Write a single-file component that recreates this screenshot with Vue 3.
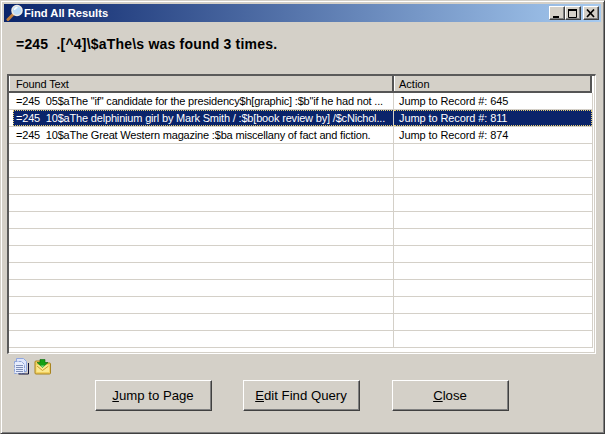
<script setup>
const found = [
  { text: '=245  05$aThe "if" candidate for the presidency$h[graphic] :$b"if he had not ...', action: 'Jump to Record #: 645' },
  { text: '=245  10$aThe delphinium girl by Mark Smith / :$b[book review by] /$cNichol...', action: 'Jump to Record #: 811', selected: true },
  { text: '=245  10$aThe Great Western magazine :$ba miscellany of fact and fiction.', action: 'Jump to Record #: 874' }
]
const rows = [...found, ...Array.from({ length: 12 }, () => ({ text: '', action: '' }))]
</script>

<template>
  <div class="window">
    <div class="titlebar">
      <svg class="title-icon" width="18" height="18" viewBox="0 0 18 18">
        <path d="M7 10.5 L2 15.5" stroke="#c08040" stroke-width="3" stroke-linecap="round" />
        <circle cx="11" cy="6.5" r="5" fill="#bcdcf8" stroke="#eeeae2" stroke-width="1.6" />
        <path d="M8.5 6 A3 3 0 0 1 11.5 3.5" stroke="#ffffff" stroke-width="1.3" fill="none" />
      </svg>
      <span class="title-text">Find All Results</span>
      <div class="win-buttons">
        <button class="win-btn min"><svg width="10" height="9" viewBox="0 0 10 9"><rect x="1" y="7" width="6" height="2" fill="#000" /></svg></button>
        <button class="win-btn max"><svg width="10" height="9" viewBox="0 0 10 9"><path d="M0.5 1.5h8v7h-8z" fill="none" stroke="#000" /><rect x="0" y="0" width="9" height="2" fill="#000" /></svg></button>
        <button class="win-btn close"><svg width="10" height="9" viewBox="0 0 10 9"><path d="M1 0.5 L8 8 M8 0.5 L1 8" stroke="#000" stroke-width="1.7" /></svg></button>
      </div>
    </div>

    <p class="message">=245&nbsp;&nbsp;.[^4]\$aThe\s was found 3 times.</p>

    <div class="grid">
      <div class="sheet">
        <div class="head">
          <div class="head-cell head-first">Found Text</div>
          <div class="head-cell head-second">Action</div>
        </div>
        <div v-for="(row, i) in rows" :key="i" class="row" :class="{ selected: row.selected }">
          <div class="cell first">{{ row.text }}</div>
          <div class="cell second">{{ row.action }}</div>
        </div>
      </div>
    </div>

    <div class="tools">
      <svg width="17" height="17" viewBox="0 0 17 17">
        <path d="M3.5 .5h7l3 3v10h-10z" fill="#dfe6fb" stroke="#8fa6e0" />
        <path d="M1.5 3.5h7l3 3v9h-10z" fill="#e6ecfd" stroke="#8ea4d8" stroke-dasharray="3 1" />
        <path d="M3 7.5h7M3 9.5h7M3 11.5h7M3 13.5h7" stroke="#7f8fb8" />
        <path d="M15.5 5v11h-10" fill="none" stroke="#10103a" />
      </svg>
      <svg width="17" height="16" viewBox="0 0 17 16">
        <path d="M1 5 V3 a1 1 0 0 1 1 -1 h4 l1 2 h8.500 a1 1 0 0 1 1 1 v9 a1 1 0 0 1 -1 1 h-13.500 a1 1 0 0 1 -1 -1z" fill="#f2d060" stroke="#a88420" />
        <path d="M2.500 6 H15 V13 H2.500z" fill="#fbe890" />
        <path d="M3 7 L8.500 11.500 L14.500 7" fill="none" stroke="#c8a030" />
        <path d="M6 .5 h5 v3 h3 L8.500 8.500 L3 3.500 h3z" fill="#14a014" stroke="#0a6a0a" stroke-width=".6" />
        <path d="M6.500 6.500 h4 L8.500 8.500z" fill="#80e080" />
      </svg>
    </div>

    <div class="actions">
      <button class="btn"><span><u>J</u>ump to Page</span></button>
      <button class="btn"><span><u>E</u>dit Find Query</span></button>
      <button class="btn"><span><u>C</u>lose</span></button>
    </div>
  </div>
</template>

<style>
html, body { margin: 0; background: #d4d0c8; }
</style>

<style scoped>
.window {
  box-sizing: border-box;
  width: 605px;
  height: 434px;
  padding: 3px;
  background: #d4d0c8;
  border: 1px solid;
  border-color: #d4d0c8 #404040 #404040 #d4d0c8;
  box-shadow: inset 1px 1px 0 #fff, inset -1px -1px 0 #808080;
  font-family: "Liberation Sans", sans-serif;
  font-size: 11px;
  color: #000;
  overflow: hidden;
}
.titlebar {
  height: 18px;
  display: flex;
  align-items: center;
  background: linear-gradient(90deg, #0a246a, #a6caf0);
  color: #fff;
}
.title-icon { flex: none; margin: 0 0 0 2px; }
.title-text { font-weight: bold; font-size: 11.2px; }
.win-buttons { margin-left: auto; display: flex; margin-right: 2px; }
.win-btn {
  box-sizing: border-box;
  width: 16px;
  height: 14px;
  padding: 0;
  display: flex;
  align-items: center;
  justify-content: center;
  background: #d4d0c8;
  border: 1px solid;
  border-color: #fff #404040 #404040 #fff;
  box-shadow: inset -1px -1px 0 #808080;
}
.win-btn.close { margin-left: 2px; }
.message {
  margin: 15px 0 0 12px;
  height: 37px;
  font-weight: bold;
  font-size: 14px;
  line-height: 15px;
  letter-spacing: .2px;
  white-space: pre;
}
.grid {
  box-sizing: border-box;
  width: 589px;
  height: 280px;
  margin-left: 3px;
  background: #fff;
  border-style: solid;
  border-width: 2px 1px 1px 2px;
  border-color: #5a5a5a #fff #fff #5a5a5a;
}
.sheet {
  box-sizing: border-box;
  height: 277px;
  border-right: 1px solid #d4d0c8;
  border-bottom: 1px solid #d4d0c8;
  overflow: hidden;
}
.head { display: flex; height: 17px; }
.head-cell {
  box-sizing: border-box;
  height: 17px;
  padding-left: 6px;
  line-height: 17px;
  background: #d4d0c8;
  border-bottom: 2px solid #555;
  border-right: 2px solid #555;
  box-shadow: inset 1px 0 0 #fff;
}
.head-first { width: 385px; padding-left: 7px; letter-spacing: -.15px; }
.head-second { width: 198px; padding-left: 5px; }
.row {
  display: flex;
  width: 584px;
  height: 17px;
  box-sizing: border-box;
  border-bottom: 1px solid #d4d0c8;
}
.cell {
  box-sizing: border-box;
  height: 16px;
  line-height: 16px;
  white-space: pre;
  overflow: hidden;
}
.cell.first {
  width: 381px;
  margin-left: 4px;
  padding-left: 3px;
  letter-spacing: -.18px;
  border-right: 1px solid #d4d0c8;
}
.cell.second {
  width: 199px;
  padding-left: 5px;
  letter-spacing: -.1px;
  border-right: 1px solid #d4d0c8;
}
.row.selected .cell {
  background: #0a246a;
  color: #fff;
  line-height: 14px;
  border-top: 1px dotted #e6cf6e;
  border-bottom: 1px dotted #e6cf6e;
}
.row.selected .cell.first {
  padding-left: 2px;
  border-left: 1px dotted #e6cf6e;
}
.row.selected .cell.second {
  width: 198px;
  border-right: 1px dotted #e6cf6e;
  box-shadow: 1px 0 0 #d4d0c8;
}
.tools { display: flex; gap: 4px; align-items: flex-end; height: 17px; margin: 4px 0 0 9px; }
.actions { display: flex; gap: 31px; margin: 5px 0 0 91px; }
.btn {
  box-sizing: border-box;
  width: 117px;
  height: 31px;
  padding: 0 1px 0 0;
  font-family: "Liberation Sans", sans-serif;
  font-size: 13.2px;
  color: #000;
  background: #d4d0c8;
  border: 1px solid;
  border-color: #fff #404040 #404040 #fff;
  box-shadow: inset -1px -1px 0 #808080;
}
.btn:last-child { margin-left: 1px; }
</style>
